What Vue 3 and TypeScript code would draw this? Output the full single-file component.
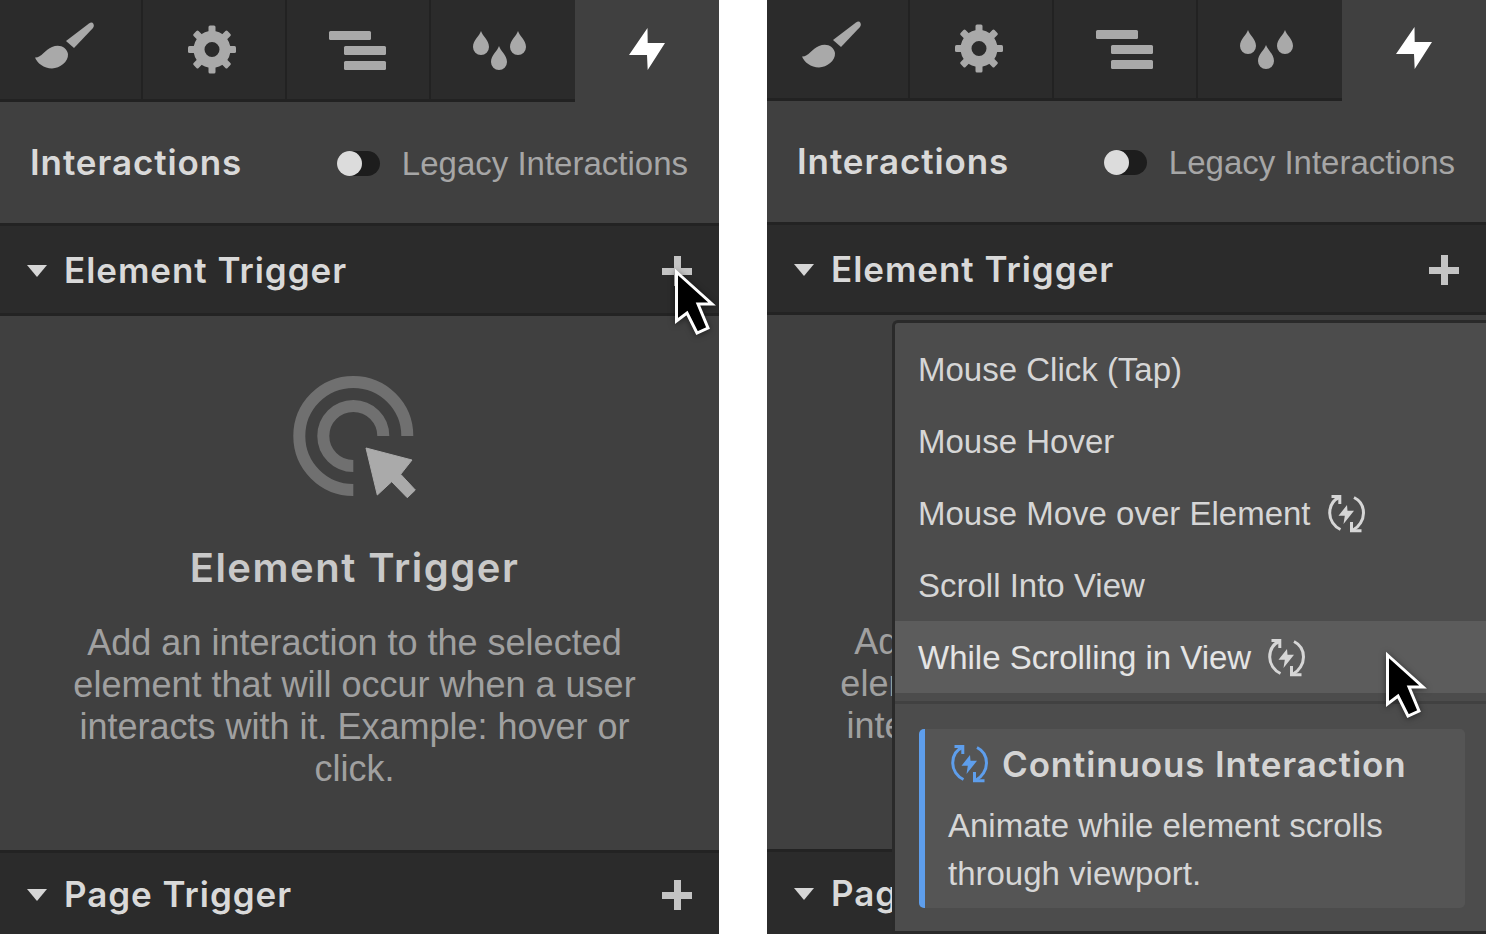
<template>
  <div class="page">
    <svg class="defs" width="0" height="0" aria-hidden="true">
      <symbol id="continuous" viewBox="0 0 37 38">
        <path d="M12 2C5 5 1.700 11 1.700 18C1.700 25 6 31.500 12.500 34.500" fill="none" stroke="currentColor" stroke-width="3" />
        <path d="M3.500 1.500H11.800V9" fill="none" stroke="currentColor" stroke-width="3" />
        <path d="M26 2.500C32 5.500 35.500 11 35.500 18C35.500 25 31 32 25 35" fill="none" stroke="currentColor" stroke-width="3" />
        <path d="M23.500 27V35.800H33.500" fill="none" stroke="currentColor" stroke-width="3" />
        <path d="M19 10L10.500 20.800H16.800L15.500 29L26 15.800H19.500Z" fill="currentColor" />
      </symbol>
    </svg>

    <section v-for="panel in panels" :key="panel.id" class="panel" :class="panel.id">
      <nav class="tabs">
        <div class="tab">
          <svg viewBox="0 0 141 99" fill="#a9a9a9">
            <path d="M66 41L89 23.500Q92 21.500 93.500 24Q94.500 26 93 28L74 48Z" />
            <path d="M35 57.500C41 58 45 50 52 47C59 43.500 67 47 68 54C68.500 62 60 68 52 68.500C44 68.500 37 63 35 57.500Z" />
          </svg>
        </div>
        <div class="tab">
          <svg viewBox="0 0 142 99" fill="#a9a9a9">
            <g transform="translate(69 49.500)">
              <circle r="13" fill="none" stroke="#a9a9a9" stroke-width="11" />
              <rect v-for="a in teeth" :key="a" x="-3.500" y="-24" width="7" height="10" rx="1.500" :transform="`rotate(${a})`" />
            </g>
          </svg>
        </div>
        <div class="tab">
          <svg viewBox="0 0 142 99" fill="#a9a9a9">
            <rect x="42" y="31" width="42" height="9" rx="1.500" />
            <rect x="57" y="46" width="42" height="9" rx="1.500" />
            <rect x="57" y="61" width="42" height="9" rx="1.500" />
          </svg>
        </div>
        <div class="tab">
          <svg viewBox="0 0 142 99" fill="#a9a9a9">
            <path v-for="d in drops" :key="d.x" :transform="`translate(${d.x} ${d.y})`" d="M0 0C1.500 5 8 9 8 16A8 8 0 0 1 -8 16C-8 9 -1.500 5 0 0Z" />
          </svg>
        </div>
        <div class="tab active">
          <svg viewBox="0 0 144 99" fill="#fff">
            <path d="M72.500 28L72.700 43H90L72.700 70L72 55H54Z" />
          </svg>
        </div>
      </nav>

      <header class="head">
        <h1>Interactions</h1>
        <div class="legacy">
          <span class="toggle"><i></i></span>
          <span>Legacy Interactions</span>
        </div>
      </header>

      <div class="bar">
        <span class="caret"></span>
        <span class="bar-title">Element Trigger</span>
        <span class="plus"></span>
      </div>

      <div class="empty">
        <svg class="click-icon" viewBox="290 372 130 130">
          <path d="M407.300 436A54 54 0 1 0 353.300 490M383.300 436A30 30 0 1 0 353.300 466" fill="none" stroke="#707070" stroke-width="12" />
          <path d="M366 448L412 460L400.700 474.300L415.300 490L407.300 497.700L391.700 481.700L377.300 495Z" fill="#aaa" stroke="#aaa" stroke-width="1" stroke-linejoin="round" />
        </svg>
        <h2>Element Trigger</h2>
        <p>Add an interaction to the selected element that will occur when a user interacts with it. Example: hover or click.</p>
      </div>

      <div class="bar page-bar">
        <span class="caret"></span>
        <span class="bar-title">Page Trigger</span>
        <span class="plus"></span>
      </div>

      <div v-if="panel.menu" class="menu">
        <ul>
          <li v-for="item in menuItems" :key="item.label" :class="{ hover: item.hover }">
            <span>{{ item.label }}</span>
            <svg v-if="item.continuous" class="loop"><use href="#continuous" /></svg>
          </li>
        </ul>
        <div class="callout">
          <h3><svg class="loop blue"><use href="#continuous" /></svg>Continuous Interaction</h3>
          <p>Animate while element scrolls through viewport.</p>
        </div>
      </div>

      <svg class="cursor" viewBox="0 0 44 70">
        <path d="M4.500 5L40 37H26L36 61L25 66L15 46L4.500 54Z" fill="#000" stroke="#fff" stroke-width="3" />
      </svg>
    </section>
  </div>
</template>

<script setup lang="ts">
const teeth = [0, 45, 90, 135, 180, 225, 270, 315]
const drops = [
  { x: 49, y: 31 },
  { x: 67, y: 46 },
  { x: 86, y: 31 }
]
const panels = [
  { id: 'left', menu: false },
  { id: 'right', menu: true }
]
const menuItems = [
  { label: 'Mouse Click (Tap)' },
  { label: 'Mouse Hover' },
  { label: 'Mouse Move over Element', continuous: true },
  { label: 'Scroll Into View' },
  { label: 'While Scrolling in View', continuous: true, hover: true }
]
</script>

<style>
html,
body {
  margin: 0;
  background: #fff;
}
</style>

<style scoped>
.page {
  display: flex;
  gap: 48px;
  width: 1486px;
  height: 934px;
  overflow: hidden;
  font-family: "Liberation Sans", Arial, sans-serif;
}

.defs {
  position: absolute;
}

.panel {
  position: relative;
  width: 719px;
  height: 935px;
  flex: none;
  overflow: hidden;
  background: #404040;
}

.panel.right {
  margin-top: -1px;
}

.tabs {
  display: flex;
  height: 102px;
}

.tab {
  width: 142px;
  height: 99px;
  background: #2b2b2b;
  border-bottom: 3px solid #222;
  border-right: 2px solid #222;
}

.tab:first-child {
  width: 141px;
}

.tab svg {
  display: block;
  width: 100%;
  height: 99px;
}

.tab:nth-child(4) {
  width: 144px;
  border-right: 0;
}

.tab.active {
  flex: 1;
  background: none;
  border: 0;
}

.head {
  display: flex;
  align-items: center;
  justify-content: space-between;
  height: 121px;
  padding: 2px 31px 0 30px;
  box-sizing: border-box;
}

.head h1 {
  margin: 0 0 4px;
  font-family: Inter, sans-serif;
  font-size: 35px;
  font-weight: 600;
  letter-spacing: 0.9px;
  color: #d9d9d9;
}

.legacy {
  display: flex;
  align-items: center;
  gap: 22px;
  font-size: 33px;
  color: #a6a6a6;
}

.toggle {
  display: block;
  width: 43px;
  height: 25px;
  border-radius: 13px;
  background: #1d1d1d;
}

.toggle i {
  display: block;
  width: 25px;
  height: 25px;
  border-radius: 50%;
  background: #dcdcdc;
}

.bar {
  display: flex;
  align-items: center;
  height: 93px;
  box-sizing: border-box;
  padding: 3px 27px 0;
  background: #2b2b2b;
  border-top: 3px solid #232323;
  border-bottom: 3px solid #232323;
}

.bar.page-bar {
  height: 90px;
  padding-top: 0;
}

.caret {
  width: 0;
  height: 0;
  border-left: 10px solid transparent;
  border-right: 10px solid transparent;
  border-top: 12px solid #d6d6d6;
}

.bar-title {
  flex: 1;
  margin: 0 0 2px 17px;
  font-family: Inter, sans-serif;
  font-size: 35px;
  font-weight: 600;
  letter-spacing: 0.95px;
  color: #d9d9d9;
}

.plus {
  width: 30px;
  height: 30px;
  background:
    linear-gradient(#c4c4c4, #c4c4c4) center / 30px 7px no-repeat,
    linear-gradient(#c4c4c4, #c4c4c4) center / 7px 30px no-repeat;
}

.empty {
  height: 534px;
  box-sizing: border-box;
  padding: 56px 10px 0 0;
  text-align: center;
}

.click-icon {
  display: block;
  width: 130px;
  height: 130px;
  margin-left: 290px;
}

.empty h2 {
  margin: 40px 0 0;
  font-family: Inter, sans-serif;
  font-size: 40px;
  line-height: 52px;
  font-weight: 600;
  letter-spacing: 1.5px;
  color: #c9c9c9;
}

.empty p {
  width: 590px;
  margin: 28px auto 0;
  font-size: 36px;
  line-height: 42px;
  color: #a0a0a0;
}

.menu {
  position: absolute;
  left: 125px;
  top: 321px;
  right: 0;
  bottom: 0;
  padding-top: 10px;
  background: #4c4c4c;
  border-left: 3px solid #2a2a2a;
  border-top: 3px solid #2a2a2a;
  border-bottom: 3px solid #2a2a2a;
  border-top-left-radius: 6px;
  box-sizing: border-box;
}

.menu ul {
  list-style: none;
  margin: 0;
  padding: 0 0 8px;
  border-bottom: 3px solid #414141;
}

.menu li {
  display: flex;
  align-items: center;
  gap: 17px;
  height: 72px;
  box-sizing: border-box;
  padding: 2px 0 0 23px;
  font-size: 33px;
  color: #d6d6d6;
}

.menu li.hover {
  background: #5c5c5c;
  color: #e4e4e4;
}

.loop {
  width: 37px;
  height: 38px;
  flex: none;
  color: #d6d6d6;
}

.loop.blue {
  color: #5e9eec;
  margin-right: 14px;
}

.callout {
  height: 179px;
  box-sizing: border-box;
  margin: 25px 21px 0 24px;
  padding: 14px 20px 0 23px;
  background: #555;
  border-left: 6px solid #5e9eec;
  border-radius: 5px;
}

.callout h3 {
  display: flex;
  align-items: center;
  margin: 0;
  padding-left: 3px;
  font-family: Inter, sans-serif;
  font-size: 35px;
  font-weight: 600;
  letter-spacing: 0.85px;
  color: #d4d4d4;
}

.callout p {
  margin: 17px 0 0;
  font-size: 33px;
  line-height: 48px;
  color: #d6d6d6;
}

.cursor {
  position: absolute;
  width: 44px;
  height: 70px;
  filter: drop-shadow(0 1px 3px rgba(0, 0, 0, 0.5));
}

.left .cursor {
  left: 672px;
  top: 267px;
}

.right .cursor {
  left: 616px;
  top: 651px;
}
</style>
